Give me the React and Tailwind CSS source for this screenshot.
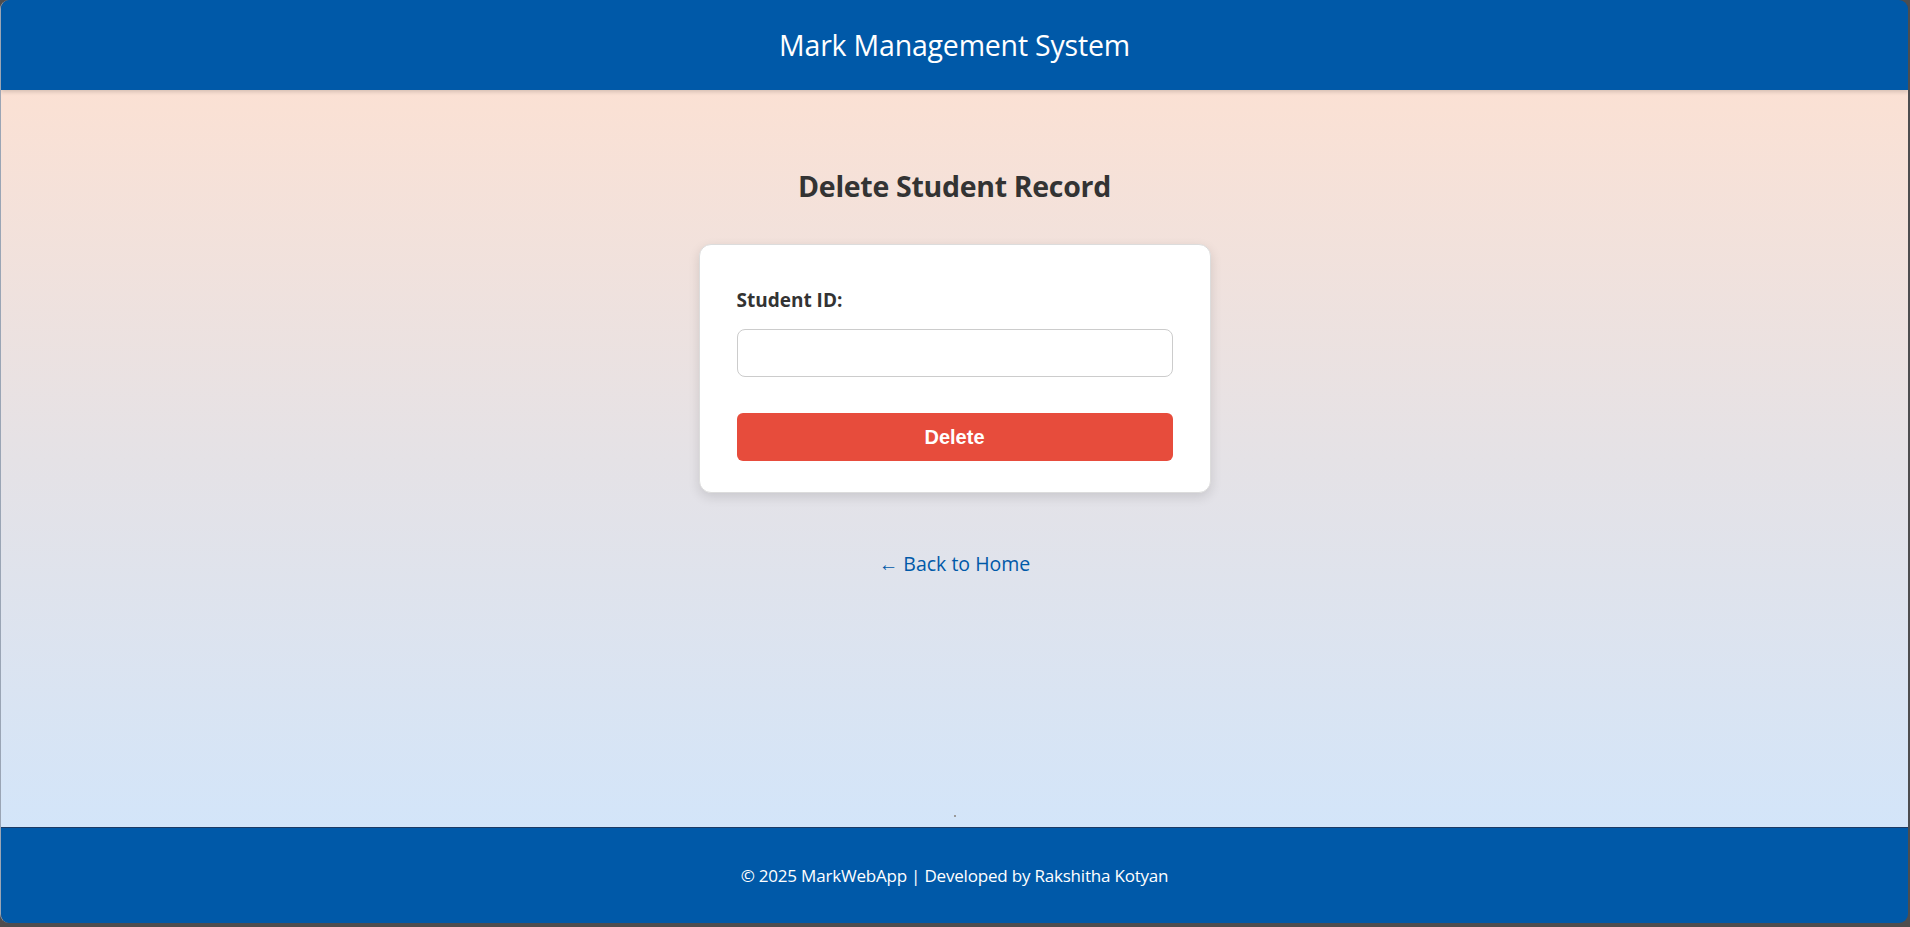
import React from 'react';

const font = { fontFamily: '"Open Sans", "Noto Sans", sans-serif' };

export default function App() {
  return (
    <div className="w-full h-[927px] bg-[#4d4d4f] pr-[2px] pb-[4px]">
      <div
        className="flex flex-col h-full rounded-[9px] overflow-hidden border-l border-[#9aa5b5]"
        style={font}
      >
        {/* header */}
        <header className="h-[90px] shrink-0 bg-[#0059a8] flex items-center justify-center shadow-[0_2px_4px_rgba(0,0,0,0.15)] z-10">
          <h1 className="text-white text-[28.5px] font-normal tracking-[-0.2px]">Mark Management System</h1>
        </header>

        {/* main */}
        <main className="flex-1 flex flex-col items-center bg-gradient-to-b from-[#fbe1d4] via-[#e5e2e6] to-[#d3e5f9]">
          <h2 className="mt-[76px] text-[28.5px] leading-[40px] font-bold text-[#333333] tracking-[-0.3px]">
            Delete Student Record
          </h2>

          <div className="mt-[38px] w-[512px] bg-white rounded-[12px] border border-[#dcdcdc] shadow-[0_4px_12px_rgba(0,0,0,0.12)] px-[37px] pt-[42px] pb-[31px]">
            <label className="block text-[19px] leading-[26px] font-bold text-[#333333]">Student ID:</label>
            <input
              type="text"
              className="mt-[16px] block w-full h-[48px] rounded-[8px] border border-[#cccccc] bg-white px-3 outline-none"
            />
            <button
              className="mt-[36px] block w-full h-[48px] rounded-[6px] bg-[#e74c3c] text-white text-[20px] font-bold"
              style={{ fontFamily: '"Liberation Sans", Arial, sans-serif' }}
            >
              Delete
            </button>
          </div>

          <a href="#" className="mt-[58px] text-[19.5px] leading-[26px] text-[#0059a8]">
            ← Back to Home
          </a>

          <div className="mt-auto mb-[10px] w-[2px] h-[2px] bg-[#9a9a9a]" />
        </main>

        {/* footer */}
        <footer className="h-[96px] shrink-0 bg-[#0059a8] border-t border-[#1b3b66] flex items-center justify-center">
          <p className="text-white text-[17px] tracking-[-0.2px]">© 2025 MarkWebApp | Developed by Rakshitha Kotyan</p>
        </footer>
      </div>
    </div>
  );
}
